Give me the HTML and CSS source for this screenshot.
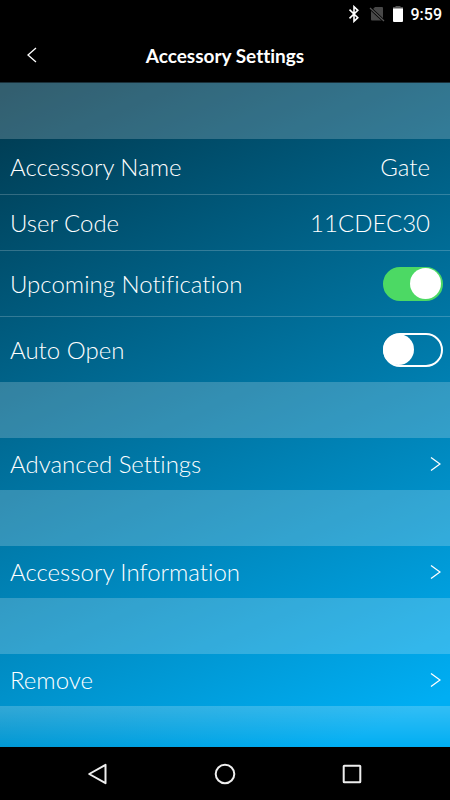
FILE: index.html
```html
<!DOCTYPE html>
<html lang="en">
<head>
<meta charset="utf-8">
<meta name="viewport" content="width=device-width, initial-scale=1">
<title>Accessory Settings</title>
<link rel="stylesheet" href="styles.css">
</head>
<body>

<div class="status-bar">
  <svg class="bluetooth" width="12" height="18" viewBox="0 0 12 18"><path d="M1.500 4.700 9.800 12.700 6 16.300V1.700L9.800 5.300 1.500 13.300"/></svg>
  <svg width="16" height="16" viewBox="0 0 16 16"><path fill="#484848" d="M6 1h7q1 0 1 1v12.500H3q-1 0-1-1V5z"/><path d="M1 2 15 15" stroke="#000" stroke-width="3"/><path d="M1 2 15 15" stroke="#555" stroke-width="1.300"/></svg>
  <svg class="battery" width="10" height="16" viewBox="0 0 10 16"><path fill="#555" d="M2.500 0h5v1H10v2H0V1h2.500z"/><path fill="#fff" d="M0 2.500h10V15q0 1-1 1H1q-1 0-1-1z"/></svg>
  <span class="clock">9:59</span>
</div>

<header class="title-bar">
  <button class="back" type="button" aria-label="Back">
    <svg width="10" height="16" viewBox="0 0 10 16"><path d="M9 1 1 8l8 7"/></svg>
  </button>
  <h1>Accessory Settings</h1>
</header>

<main class="settings">
  <div class="group">
    <div class="row">
      <span>Accessory Name</span>
      <span class="value">Gate</span>
    </div>
    <div class="row">
      <span>User Code</span>
      <span class="value">11CDEC30</span>
    </div>
    <div class="row row-switch">
      <label for="upcoming">Upcoming Notification</label>
      <input class="switch" type="checkbox" id="upcoming" checked>
    </div>
    <div class="row row-switch">
      <label for="autoOpen">Auto Open</label>
      <input class="switch" type="checkbox" id="autoOpen">
    </div>
  </div>

  <button class="row row-link" type="button">
    <span>Advanced Settings</span>
    <svg width="12" height="16" viewBox="0 0 12 16"><path d="M2 1.500 11 8l-9 6.500"/></svg>
  </button>

  <button class="row row-link" type="button">
    <span>Accessory Information</span>
    <svg width="12" height="16" viewBox="0 0 12 16"><path d="M2 1.500 11 8l-9 6.500"/></svg>
  </button>

  <button class="row row-link" type="button">
    <span>Remove</span>
    <svg width="12" height="16" viewBox="0 0 12 16"><path d="M2 1.500 11 8l-9 6.500"/></svg>
  </button>

  <div class="fade"></div>
</main>

<nav class="nav-bar">
  <button type="button" aria-label="Back"><svg width="22" height="22" viewBox="0 0 22 22"><path d="M18.500 1.800v18.400L2.200 11z"/></svg></button>
  <button type="button" aria-label="Home"><svg width="22" height="22" viewBox="0 0 22 22"><circle cx="11" cy="11" r="9.300"/></svg></button>
  <button type="button" aria-label="Recent apps"><svg width="22" height="22" viewBox="0 0 22 22"><rect x="2.700" y="2.700" width="16.600" height="16.600" rx=".6"/></svg></button>
</nav>

</body>
</html>
```
FILE: styles.css
```css
* {
  box-sizing: border-box;
}

body {
  margin: 0;
  min-height: 100vh;
  display: flex;
  flex-direction: column;
  background: #000;
  color: #fff;
  font-family: Lato, sans-serif;
  font-variant-ligatures: none;
}

button {
  padding: 0;
  border: 0;
  background: none;
  color: inherit;
  font: inherit;
  cursor: pointer;
}

svg {
  display: block;
  fill: none;
}

/* top bars */
.status-bar {
  display: flex;
  justify-content: flex-end;
  align-items: center;
  height: 28px;
  padding-right: 8px;
}

.bluetooth {
  margin-right: 9px;
  stroke: #fff;
  stroke-width: 1.6;
}

.battery {
  margin: 0 8px;
}

.clock {
  font: 500 16px Roboto, sans-serif;
}

.title-bar {
  display: grid;
  grid-template-columns: 64px 1fr 64px;
  height: 54px;
}

.title-bar h1 {
  margin: 0;
  align-self: center;
  text-align: center;
  font-size: 19px;
  font-weight: 700;
}

.back {
  display: flex;
  align-items: center;
  padding-left: 27px;
}

.back svg,
.row-link svg {
  stroke: #fff;
  stroke-width: 1.3;
}

/* settings list */
.settings {
  flex: 1;
  display: flex;
  flex-direction: column;
  border-top: 1px solid #1a2f38;
  background: linear-gradient(156deg, #00364a, #00aef3 94%);
}

.group,
.row-link {
  border-top: 56px solid rgba(255, 255, 255, 0.2);
}

.row {
  display: flex;
  justify-content: space-between;
  align-items: center;
  width: 100%;
  min-height: 55px;
  padding: 0 20px 0 10px;
  font-size: 24px;
  font-weight: 300;
  line-height: 32px;
}

.group .row + .row {
  min-height: 56px;
  border-top: 1px solid rgba(255, 255, 255, 0.2);
}

.group .row + .row-switch {
  min-height: 66px;
  padding-right: 7px;
}

.row-link {
  min-height: 108px;
  padding-right: 9px;
  text-align: left;
}

.fade {
  flex: 1;
  min-height: 40px;
  background: linear-gradient(rgba(255, 255, 255, 0.2), rgba(255, 255, 255, 0));
}

.switch {
  appearance: none;
  display: flex;
  align-items: center;
  width: 60px;
  height: 34px;
  margin: 0;
  border: 2px solid #fff;
  border-radius: 17px;
  cursor: pointer;
}

.switch::before {
  content: "";
  width: 31px;
  height: 31px;
  margin-left: -2px;
  border-radius: 50%;
  background: #fff;
}

.switch:checked {
  justify-content: flex-end;
  border-color: #4cd964;
  background: #4cd964;
}

.switch:checked::before {
  margin: 0;
}

/* system navigation */
.nav-bar {
  display: flex;
  justify-content: space-between;
  align-items: center;
  height: 53px;
  padding: 0 87px;
}

.nav-bar svg {
  stroke: #eee;
  stroke-width: 2;
  stroke-linejoin: round;
}
```
